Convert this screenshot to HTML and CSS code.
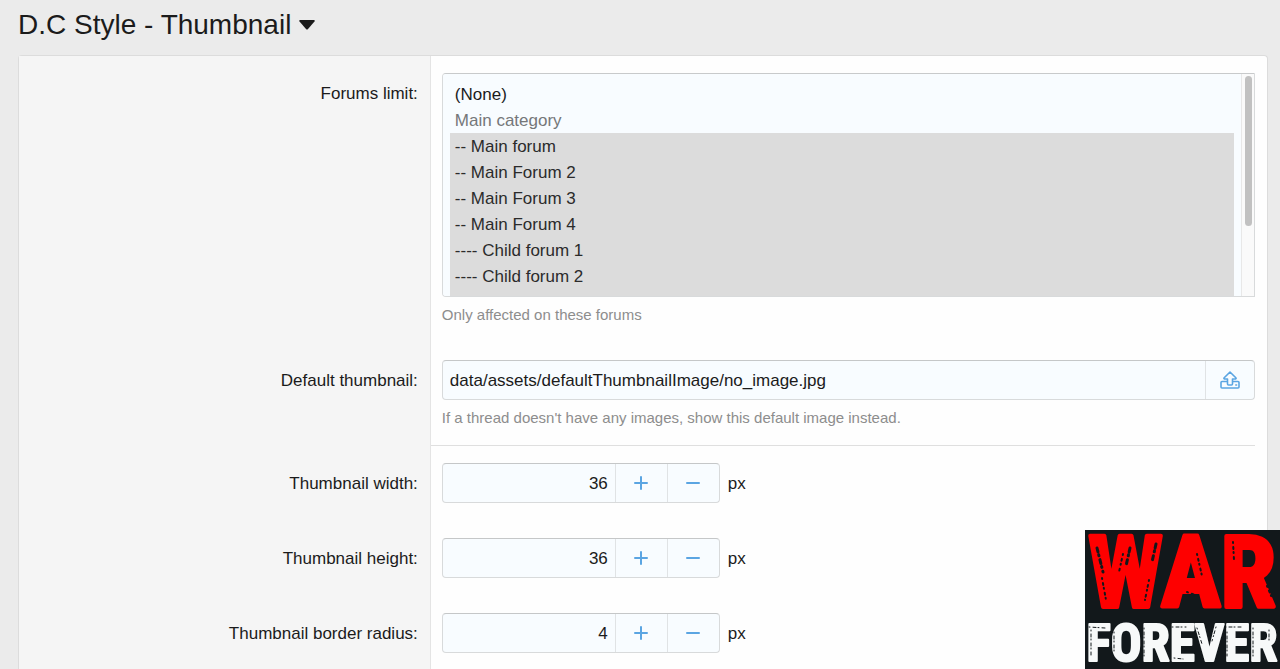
FILE: index.html
```html
<!DOCTYPE html>
<html lang="en">
<head>
<meta charset="utf-8">
<title>D.C Style - Thumbnail</title>
<link rel="stylesheet" href="styles.css">
</head>
<body>
<header class="page-header">
  <h1 class="page-title">D.C Style - Thumbnail</h1>
  <button class="title-menu" type="button" aria-label="Options menu"><svg width="16" height="10" viewBox="0 0 16 10" aria-hidden="true"><path d="M1 0h14q1.2 .4 .5 1.4L9 9q-1 1-2 0L.5 1.4Q-.2 .4 1 0z" fill="currentColor"/></svg></button>
</header>
<form class="panel">
  <div class="row">
    <div class="row-label"><label for="forums">Forums limit:</label></div>
    <div class="row-body">
      <div class="list-wrap">
        <select class="forum-list" id="forums" multiple size="8">
          <option>(None)</option>
          <option disabled>Main category</option>
          <option selected>-- Main forum</option>
          <option selected>-- Main Forum 2</option>
          <option selected>-- Main Forum 3</option>
          <option selected>-- Main Forum 4</option>
          <option selected>---- Child forum 1</option>
          <option selected>---- Child forum 2</option>
          <option selected>---- Child forum 3</option>
          <option selected>---- Child forum 4</option>
          <option selected>-- Main Forum 5</option>
          <option selected>-- Main Forum 6</option>
        </select>
        <div class="scroll-track" aria-hidden="true"><div class="scroll-thumb"></div></div>
      </div>
      <p class="hint">Only affected on these forums</p>
    </div>
  </div>
  <div class="row">
    <div class="row-label"><label for="default">Default thumbnail:</label></div>
    <div class="row-body">
      <div class="group">
        <input class="field" id="default" type="text" value="data/assets/defaultThumbnailImage/no_image.jpg">
        <button class="group-button" type="button" aria-label="Upload"><svg width="20" height="18" viewBox="0 0 20 18" fill="none" stroke="currentColor" stroke-width="1.6" stroke-linejoin="round" aria-hidden="true"><path d="M7.500 13V8H4.500Q3.500 7.600 4.200 6.800L10 1l5.800 5.800Q16.500 7.600 15.500 8h-3v5q0 1-1 1h-3q-1 0-1-1z"/><path d="M7.500 10.500H2q-1 0-1 1V16q0 1 1 1h16q1 0 1-1v-4.500q0-1-1-1h-5.500"/><path d="M15.800 14h.8" stroke-linecap="round"/></svg></button>
      </div>
      <p class="hint">If a thread doesn't have any images, show this default image instead.</p>
    </div>
  </div>
  <div class="row">
    <div class="row-label"><label for="width">Thumbnail width:</label></div>
    <div class="row-body divided">
      <div class="measure">
        <div class="group stepper">
          <input class="field number" id="width" type="text" inputmode="numeric" value="36">
          <button class="group-button" type="button" aria-label="Increase width"><svg width="14" height="14" viewBox="0 0 14 14" aria-hidden="true"><path d="M1 7h12M7 1v12" stroke="currentColor" stroke-width="2" stroke-linecap="round"/></svg></button>
          <button class="group-button" type="button" aria-label="Decrease width"><svg width="14" height="14" viewBox="0 0 14 14" aria-hidden="true"><path d="M1 7h12" stroke="currentColor" stroke-width="2" stroke-linecap="round"/></svg></button>
        </div>
        <span class="unit">px</span>
      </div>
    </div>
  </div>
  <div class="row">
    <div class="row-label"><label for="height">Thumbnail height:</label></div>
    <div class="row-body">
      <div class="measure">
        <div class="group stepper">
          <input class="field number" id="height" type="text" inputmode="numeric" value="36">
          <button class="group-button" type="button" aria-label="Increase height"><svg width="14" height="14" viewBox="0 0 14 14" aria-hidden="true"><path d="M1 7h12M7 1v12" stroke="currentColor" stroke-width="2" stroke-linecap="round"/></svg></button>
          <button class="group-button" type="button" aria-label="Decrease height"><svg width="14" height="14" viewBox="0 0 14 14" aria-hidden="true"><path d="M1 7h12" stroke="currentColor" stroke-width="2" stroke-linecap="round"/></svg></button>
        </div>
        <span class="unit">px</span>
      </div>
    </div>
  </div>
  <div class="row">
    <div class="row-label"><label for="radius">Thumbnail border radius:</label></div>
    <div class="row-body">
      <div class="measure">
        <div class="group stepper">
          <input class="field number" id="radius" type="text" inputmode="numeric" value="4">
          <button class="group-button" type="button" aria-label="Increase border radius"><svg width="14" height="14" viewBox="0 0 14 14" aria-hidden="true"><path d="M1 7h12M7 1v12" stroke="currentColor" stroke-width="2" stroke-linecap="round"/></svg></button>
          <button class="group-button" type="button" aria-label="Decrease border radius"><svg width="14" height="14" viewBox="0 0 14 14" aria-hidden="true"><path d="M1 7h12" stroke="currentColor" stroke-width="2" stroke-linecap="round"/></svg></button>
        </div>
        <span class="unit">px</span>
      </div>
    </div>
  </div>
</form>
<div class="badge">
  <svg width="195" height="139" viewBox="0 0 195 139" role="img" aria-label="War Forever">
    <rect width="195" height="139" fill="#12181b"/>
    <g class="badge-text" text-anchor="middle" stroke-linejoin="round">
      <text x="97" y="77" font-size="100" fill="#fe0000" stroke="#fe0000" stroke-width="4">WAR</text>
      <text x="97" y="131" font-size="51" fill="#f7f9f9" stroke="#f7f9f9" stroke-width="2">FOREVER</text>
    </g>
    <g fill="none" stroke="#12181b" stroke-linecap="round">
      <path stroke-width="3" stroke-dasharray="4 3 1 4" d="M12 18l6 24M45 18l-4 18M71 14l-4 18"/>
      <path stroke-width="2" stroke-dasharray="1 4 2 3" d="M17 48l4 22M64 50l-4 20M38 24l-4 18M112 24l5 22M102 62l8 3M148 12l1 18M182 56l5 12"/>
      <path stroke-width="1" stroke-dasharray="1 3 3 2" d="M4 97l16 1M6 100v26M29 102v20M59 98v28M87 97h14M89 128l9 1M112 98l5 16M131 97l-4 14M140 97h16M142 102v24M168 98v28M184 100v10"/>
    </g>
  </svg>
</div>
</body>
</html>
```
FILE: styles.css
```css
* { box-sizing: border-box; }
html { min-height: 100%; background: #ebebeb; }
body {
  margin: 0;
  padding: 0 12px 0 18px;
  min-height: 100vh;
  display: flex;
  flex-direction: column;
  background: #ebebeb;
  color: #1b1b1b;
  font: 17px/26px "Liberation Sans", Arial, sans-serif;
  overflow: hidden;
}
button, input, select { font: inherit; color: inherit; }
.page-header { display: flex; align-items: center; gap: 8px; height: 55px; padding-bottom: 6px; }
.page-title { margin: 0; font-size: 28px; line-height: 34px; font-weight: 400; }
.title-menu { display: flex; padding: 0; border: 0; background: none; }
.panel {
  flex: 1;
  border: 1px solid #dcdcdc;
  border-bottom: 0;
  border-radius: 4px 4px 0 0;
  background: linear-gradient(90deg, #f5f5f5 33%, #fefefe 33%);
}
.row { display: flex; }
.row-label {
  flex: 0 0 33%;
  padding: 25px 12px 18px;
  border-right: 1px solid #e4e4e4;
  background: #f5f5f5;
  text-align: right;
}
.row-body { flex: 1; min-width: 0; margin-right: 12px; padding: 17px 0 18px 11px; }
.divided { box-shadow: 0 -1px #dfdfdf; }
.list-wrap { position: relative; }
.forum-list {
  display: block;
  width: 100%;
  height: 224px;
  padding: 7px 20px 0 7px;
  border: 1px solid #d8dadb;
  border-top-color: #c8cacb;
  border-radius: 4px 0 0 4px;
  background: #f8fcff;
  outline: 0;
  overflow-y: scroll;
  scrollbar-width: none;
}
.forum-list option { min-height: 26px; padding: 4px 5px 2px; }
.forum-list option:disabled { color: #757779; }
.forum-list option:checked { background: #dcdcdc linear-gradient(#dcdcdc, #dcdcdc); color: #2b2b2b; }
.scroll-track {
  position: absolute;
  top: 1px;
  right: 1px;
  bottom: 1px;
  width: 13px;
  padding: 2px 2px 0 3px;
  border-left: 1px solid #e8e8e8;
  background: #fafafa;
}
.scroll-thumb { height: 68%; border-radius: 4px; background: #c1c1c1; }
.hint { margin: 7px 0 0; color: #8d8d8d; font-size: 15px; line-height: 21px; }
.group {
  display: flex;
  height: 40px;
  border: 1px solid #d8dadb;
  border-top-color: #c5c7c8;
  border-radius: 4px;
  background: #f8fcff;
  overflow: hidden;
}
.field { flex: 1; min-width: 0; padding: 2px 7px 0; border: 0; background: none; outline: 0; }
.number { text-align: right; }
.group-button {
  flex: 0 0 49px;
  display: grid;
  place-items: center;
  padding: 0;
  border: 0;
  border-left: 1px solid #e0e3e5;
  background: none;
  color: #5ba5e2;
}
.measure { display: flex; align-items: center; gap: 8px; }
.unit { padding-top: 2px; }
.stepper { width: 278px; }
.stepper .group-button { flex-basis: 52px; }
.badge { position: fixed; right: 0; bottom: 0; line-height: 0; }
.badge-text { font-family: "Roboto Condensed", Roboto, sans-serif; font-weight: 700; }
```
